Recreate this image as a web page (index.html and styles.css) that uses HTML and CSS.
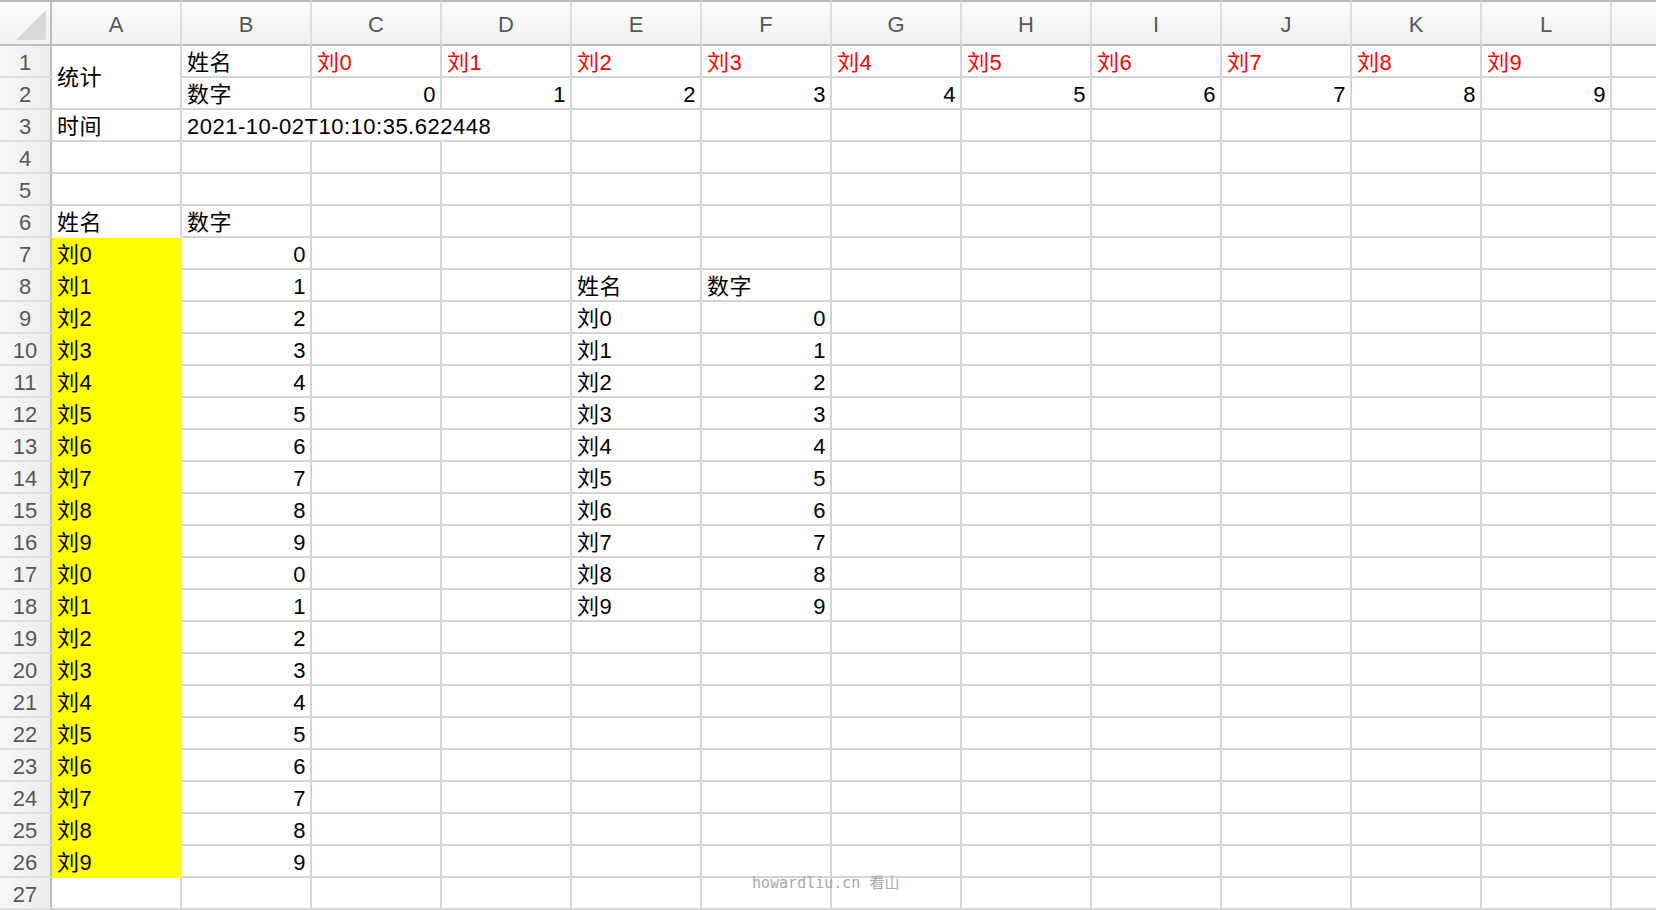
FILE: index.html
```html
<!DOCTYPE html>
<html lang="zh-CN">
<head>
<meta charset="utf-8">
<title>Sheet</title>
<link rel="stylesheet" href="styles.css">
</head>
<body>
<div class="sheet">
  <!-- header -->
  <div class="corner"><svg width="50" height="42" viewBox="0 0 50 42"><polygon points="16,38 46,8 46,38" fill="#d9d9d9"/></svg></div>
  <div class="ch">A</div><div class="ch">B</div><div class="ch">C</div><div class="ch">D</div><div class="ch">E</div><div class="ch">F</div><div class="ch">G</div><div class="ch">H</div><div class="ch">I</div><div class="ch">J</div><div class="ch">K</div><div class="ch">L</div><div class="ch last"></div>
  <!-- 1 -->
  <div class="rh">1</div><div class="c merge2">统计</div><div class="c">姓名</div><div class="c red">刘0</div><div class="c red">刘1</div><div class="c red">刘2</div><div class="c red">刘3</div><div class="c red">刘4</div><div class="c red">刘5</div><div class="c red">刘6</div><div class="c red">刘7</div><div class="c red">刘8</div><div class="c red">刘9</div><div class="c last"></div>
  <!-- 2 -->
  <div class="rh">2</div><div class="c">数字</div><div class="c r">0</div><div class="c r">1</div><div class="c r">2</div><div class="c r">3</div><div class="c r">4</div><div class="c r">5</div><div class="c r">6</div><div class="c r">7</div><div class="c r">8</div><div class="c r">9</div><div class="c last"></div>
  <!-- 3 -->
  <div class="rh">3</div><div class="c">时间</div><div class="c span3">2021-10-02T10:10:35.622448</div><div class="c"></div><div class="c"></div><div class="c"></div><div class="c"></div><div class="c"></div><div class="c"></div><div class="c"></div><div class="c"></div><div class="c last"></div>
  <!-- 4 -->
  <div class="rh">4</div><div class="c"></div><div class="c"></div><div class="c"></div><div class="c"></div><div class="c"></div><div class="c"></div><div class="c"></div><div class="c"></div><div class="c"></div><div class="c"></div><div class="c"></div><div class="c"></div><div class="c last"></div>
  <!-- 5 -->
  <div class="rh">5</div><div class="c"></div><div class="c"></div><div class="c"></div><div class="c"></div><div class="c"></div><div class="c"></div><div class="c"></div><div class="c"></div><div class="c"></div><div class="c"></div><div class="c"></div><div class="c"></div><div class="c last"></div>
  <!-- 6 -->
  <div class="rh">6</div><div class="c nb">姓名</div><div class="c">数字</div><div class="c"></div><div class="c"></div><div class="c"></div><div class="c"></div><div class="c"></div><div class="c"></div><div class="c"></div><div class="c"></div><div class="c"></div><div class="c"></div><div class="c last"></div>
  <!-- 7 -->
  <div class="rh">7</div><div class="c y">刘0</div><div class="c r">0</div><div class="c"></div><div class="c"></div><div class="c"></div><div class="c"></div><div class="c"></div><div class="c"></div><div class="c"></div><div class="c"></div><div class="c"></div><div class="c"></div><div class="c last"></div>
  <!-- 8 -->
  <div class="rh">8</div><div class="c y">刘1</div><div class="c r">1</div><div class="c"></div><div class="c"></div><div class="c">姓名</div><div class="c">数字</div><div class="c"></div><div class="c"></div><div class="c"></div><div class="c"></div><div class="c"></div><div class="c"></div><div class="c last"></div>
  <!-- 9 -->
  <div class="rh">9</div><div class="c y">刘2</div><div class="c r">2</div><div class="c"></div><div class="c"></div><div class="c">刘0</div><div class="c r">0</div><div class="c"></div><div class="c"></div><div class="c"></div><div class="c"></div><div class="c"></div><div class="c"></div><div class="c last"></div>
  <!-- 10 -->
  <div class="rh">10</div><div class="c y">刘3</div><div class="c r">3</div><div class="c"></div><div class="c"></div><div class="c">刘1</div><div class="c r">1</div><div class="c"></div><div class="c"></div><div class="c"></div><div class="c"></div><div class="c"></div><div class="c"></div><div class="c last"></div>
  <!-- 11 -->
  <div class="rh">11</div><div class="c y">刘4</div><div class="c r">4</div><div class="c"></div><div class="c"></div><div class="c">刘2</div><div class="c r">2</div><div class="c"></div><div class="c"></div><div class="c"></div><div class="c"></div><div class="c"></div><div class="c"></div><div class="c last"></div>
  <!-- 12 -->
  <div class="rh">12</div><div class="c y">刘5</div><div class="c r">5</div><div class="c"></div><div class="c"></div><div class="c">刘3</div><div class="c r">3</div><div class="c"></div><div class="c"></div><div class="c"></div><div class="c"></div><div class="c"></div><div class="c"></div><div class="c last"></div>
  <!-- 13 -->
  <div class="rh">13</div><div class="c y">刘6</div><div class="c r">6</div><div class="c"></div><div class="c"></div><div class="c">刘4</div><div class="c r">4</div><div class="c"></div><div class="c"></div><div class="c"></div><div class="c"></div><div class="c"></div><div class="c"></div><div class="c last"></div>
  <!-- 14 -->
  <div class="rh">14</div><div class="c y">刘7</div><div class="c r">7</div><div class="c"></div><div class="c"></div><div class="c">刘5</div><div class="c r">5</div><div class="c"></div><div class="c"></div><div class="c"></div><div class="c"></div><div class="c"></div><div class="c"></div><div class="c last"></div>
  <!-- 15 -->
  <div class="rh">15</div><div class="c y">刘8</div><div class="c r">8</div><div class="c"></div><div class="c"></div><div class="c">刘6</div><div class="c r">6</div><div class="c"></div><div class="c"></div><div class="c"></div><div class="c"></div><div class="c"></div><div class="c"></div><div class="c last"></div>
  <!-- 16 -->
  <div class="rh">16</div><div class="c y">刘9</div><div class="c r">9</div><div class="c"></div><div class="c"></div><div class="c">刘7</div><div class="c r">7</div><div class="c"></div><div class="c"></div><div class="c"></div><div class="c"></div><div class="c"></div><div class="c"></div><div class="c last"></div>
  <!-- 17 -->
  <div class="rh">17</div><div class="c y">刘0</div><div class="c r">0</div><div class="c"></div><div class="c"></div><div class="c">刘8</div><div class="c r">8</div><div class="c"></div><div class="c"></div><div class="c"></div><div class="c"></div><div class="c"></div><div class="c"></div><div class="c last"></div>
  <!-- 18 -->
  <div class="rh">18</div><div class="c y">刘1</div><div class="c r">1</div><div class="c"></div><div class="c"></div><div class="c">刘9</div><div class="c r">9</div><div class="c"></div><div class="c"></div><div class="c"></div><div class="c"></div><div class="c"></div><div class="c"></div><div class="c last"></div>
  <!-- 19 -->
  <div class="rh">19</div><div class="c y">刘2</div><div class="c r">2</div><div class="c"></div><div class="c"></div><div class="c"></div><div class="c"></div><div class="c"></div><div class="c"></div><div class="c"></div><div class="c"></div><div class="c"></div><div class="c"></div><div class="c last"></div>
  <!-- 20 -->
  <div class="rh">20</div><div class="c y">刘3</div><div class="c r">3</div><div class="c"></div><div class="c"></div><div class="c"></div><div class="c"></div><div class="c"></div><div class="c"></div><div class="c"></div><div class="c"></div><div class="c"></div><div class="c"></div><div class="c last"></div>
  <!-- 21 -->
  <div class="rh">21</div><div class="c y">刘4</div><div class="c r">4</div><div class="c"></div><div class="c"></div><div class="c"></div><div class="c"></div><div class="c"></div><div class="c"></div><div class="c"></div><div class="c"></div><div class="c"></div><div class="c"></div><div class="c last"></div>
  <!-- 22 -->
  <div class="rh">22</div><div class="c y">刘5</div><div class="c r">5</div><div class="c"></div><div class="c"></div><div class="c"></div><div class="c"></div><div class="c"></div><div class="c"></div><div class="c"></div><div class="c"></div><div class="c"></div><div class="c"></div><div class="c last"></div>
  <!-- 23 -->
  <div class="rh">23</div><div class="c y">刘6</div><div class="c r">6</div><div class="c"></div><div class="c"></div><div class="c"></div><div class="c"></div><div class="c"></div><div class="c"></div><div class="c"></div><div class="c"></div><div class="c"></div><div class="c"></div><div class="c last"></div>
  <!-- 24 -->
  <div class="rh">24</div><div class="c y">刘7</div><div class="c r">7</div><div class="c"></div><div class="c"></div><div class="c"></div><div class="c"></div><div class="c"></div><div class="c"></div><div class="c"></div><div class="c"></div><div class="c"></div><div class="c"></div><div class="c last"></div>
  <!-- 25 -->
  <div class="rh">25</div><div class="c y">刘8</div><div class="c r">8</div><div class="c"></div><div class="c"></div><div class="c"></div><div class="c"></div><div class="c"></div><div class="c"></div><div class="c"></div><div class="c"></div><div class="c"></div><div class="c"></div><div class="c last"></div>
  <!-- 26 -->
  <div class="rh">26</div><div class="c y">刘9</div><div class="c r">9</div><div class="c"></div><div class="c"></div><div class="c"></div><div class="c"></div><div class="c"></div><div class="c"></div><div class="c"></div><div class="c"></div><div class="c"></div><div class="c"></div><div class="c last"></div>
  <!-- 27 -->
  <div class="rh">27</div><div class="c"></div><div class="c"></div><div class="c"></div><div class="c"></div><div class="c"></div><div class="c"></div><div class="c"></div><div class="c"></div><div class="c"></div><div class="c"></div><div class="c"></div><div class="c"></div><div class="c last"></div>
</div>
<div class="wm">howardliu.cn 看山</div>
</body>
</html>
```
FILE: styles.css
```css
* { box-sizing: border-box; }
html, body { margin: 0; padding: 0; }
body {
  width: 1656px;
  height: 910px;
  overflow: hidden;
  background: #ffffff;
  position: relative;
}
.sheet {
  display: grid;
  grid-template-columns: 52px repeat(12, 130px) 44px;
  grid-template-rows: 46px repeat(27, 32px);
  font-family: "Liberation Sans", "Noto Sans CJK SC", sans-serif;
}
.corner {
  border-top: 2px solid #b8b8b8;
  border-right: 2px solid #bdbdbd;
  border-bottom: 2px solid #bdbdbd;
  background: linear-gradient(#fbfbfb, #f1f1f1);
}
.corner svg { display: block; }
.ch {
  border-top: 2px solid #b8b8b8;
  border-right: 2px solid #dedede;
  border-bottom: 2px solid #bdbdbd;
  background: linear-gradient(#fbfbfb, #f1f1f1);
  text-align: center;
  font-size: 22px;
  line-height: 39px;
  padding-top: 3px;
  color: #585858;
}
.rh {
  border-right: 2px solid #bdbdbd;
  border-bottom: 2px solid #e0e0e0;
  background: linear-gradient(to right, #f8f8f8, #ececec);
  text-align: center;
  font-size: 22px;
  line-height: 28px;
  padding-top: 3px;
  color: #585858;
}
.c {
  border-right: 2px solid #d4d4d4;
  border-bottom: 2px solid #d4d4d4;
  padding: 3px 5px 0;
  font-size: 22px;
  line-height: 28px;
  letter-spacing: 0.5px;
  color: #000000;
  white-space: nowrap;
  overflow: hidden;
}
.r { text-align: right; padding-right: 4px; }
.red { color: #ff0000; }
.y { background: #ffff00; border-color: #ffff00; }
.nb { border-bottom-color: #ffffff; }
.last { border-right: none; }
.merge2 {
  grid-row: span 2;
  display: flex;
  align-items: center;
  padding-top: 2px;
}
.span3 { grid-column: span 3; }
.wm {
  position: absolute;
  left: 752px;
  top: 874px;
  font-family: "DejaVu Sans Mono", "Noto Sans CJK SC", monospace;
  font-size: 15px;
  line-height: 18px;
  color: #a8a8a8;
  white-space: nowrap;
}
```
